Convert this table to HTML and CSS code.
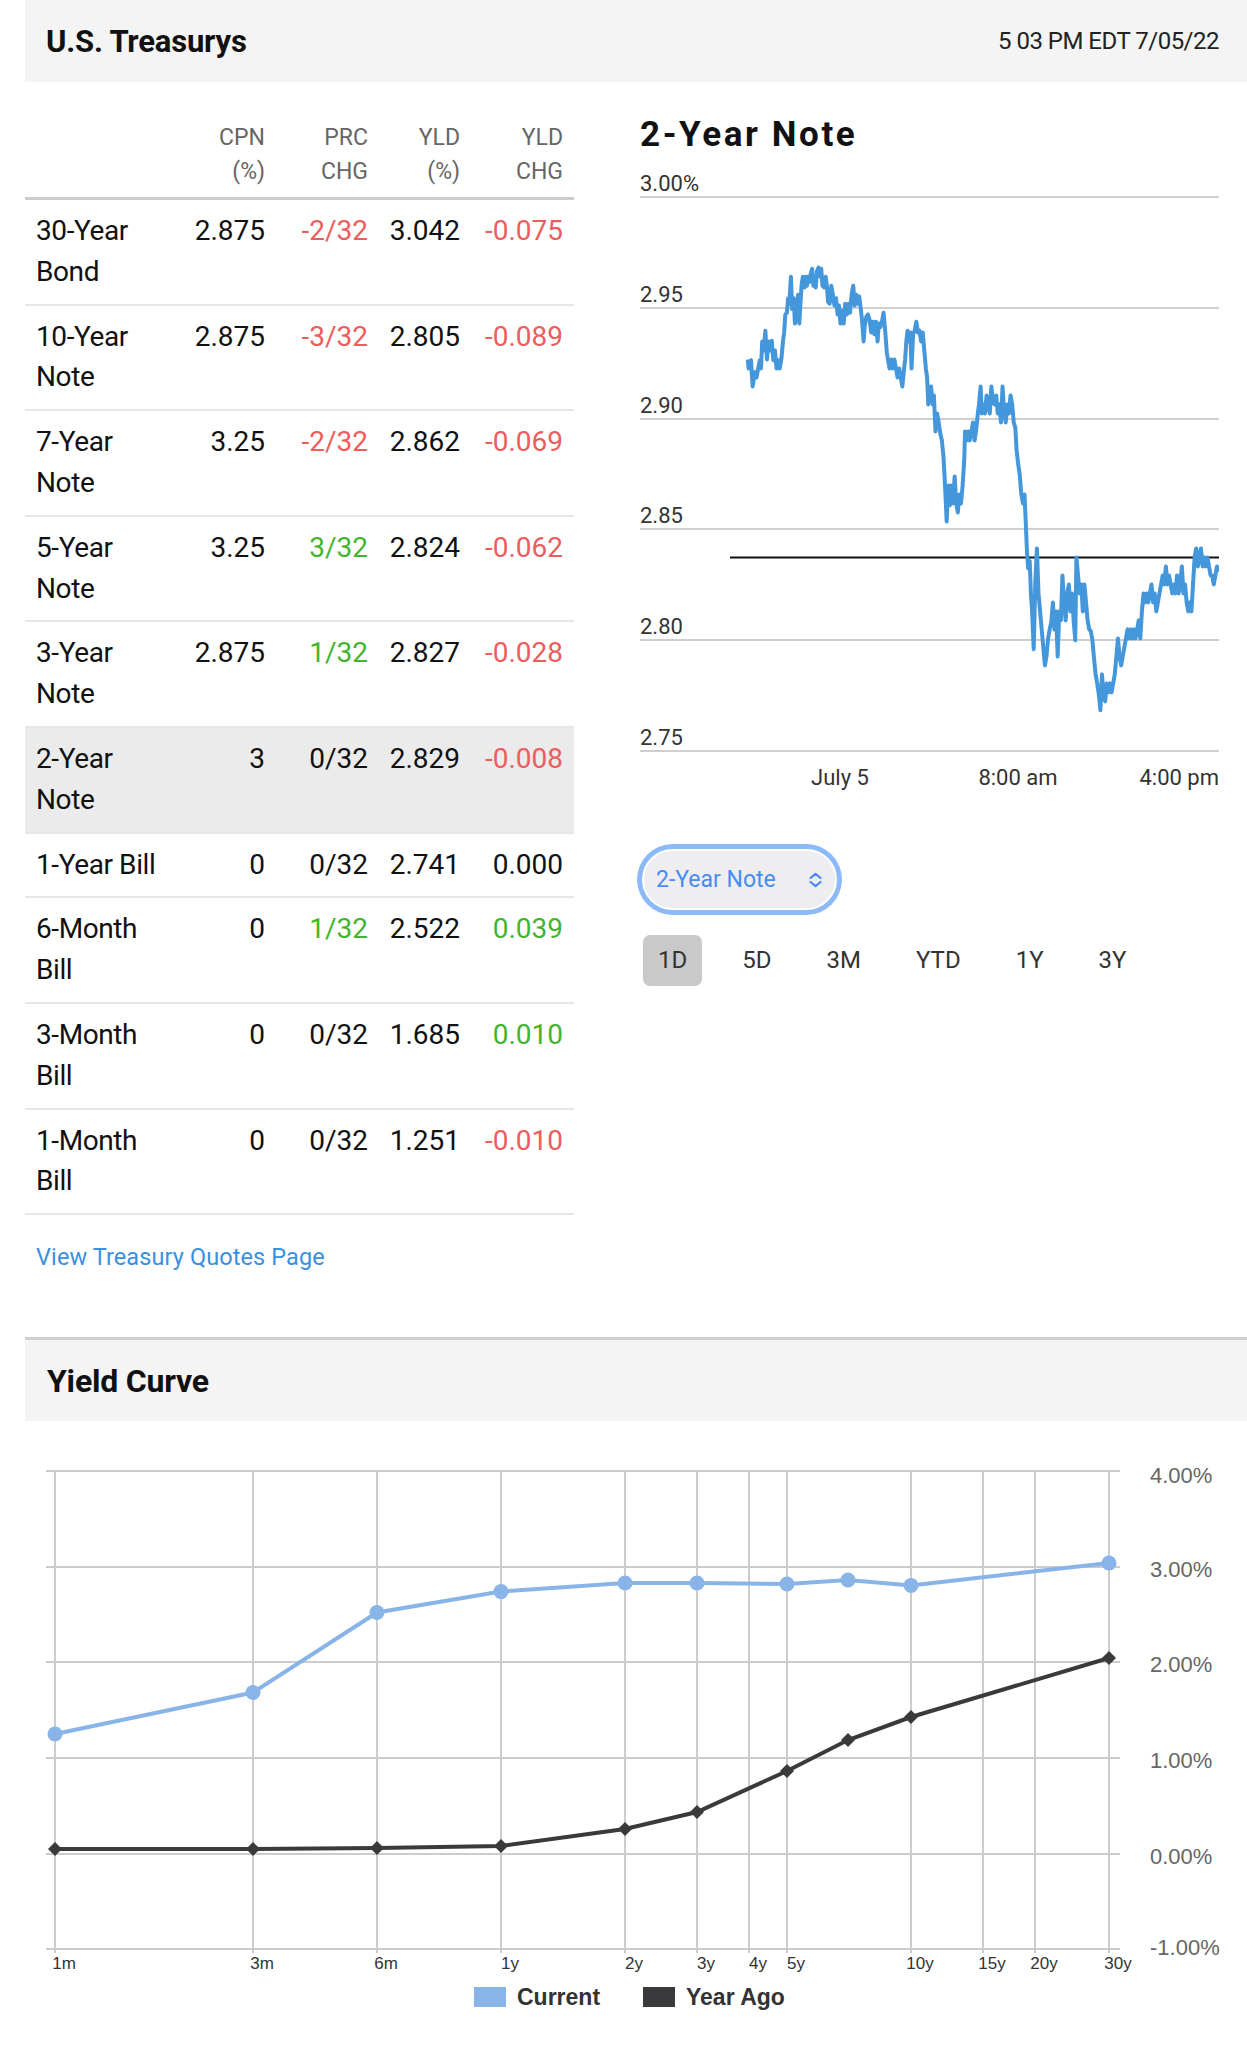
FILE: index.html
```html
<!DOCTYPE html>
<html lang="en">
<head>
<meta charset="utf-8">
<title>U.S. Treasurys</title>
<link rel="stylesheet" href="styles.css">
</head>
<body>
<div class="page">
  <header class="band top-band">
    <h1 class="band-title">U.S. Treasurys</h1>
    <span class="stamp">5 03 PM EDT 7/05/22</span>
  </header>

  <div class="main">
    <section class="left">
      <div class="tbl">
        <div class="row head">
          <div class="c name"></div>
          <div class="c">CPN<br>(%)</div>
          <div class="c">PRC<br>CHG</div>
          <div class="c">YLD<br>(%)</div>
          <div class="c">YLD<br>CHG</div>
        </div>
        <div class="row">
          <div class="c name">30-Year<br>Bond</div>
          <div class="c">2.875</div><div class="c neg">-2/32</div><div class="c">3.042</div><div class="c neg">-0.075</div>
        </div>
        <div class="row">
          <div class="c name">10-Year<br>Note</div>
          <div class="c">2.875</div><div class="c neg">-3/32</div><div class="c">2.805</div><div class="c neg">-0.089</div>
        </div>
        <div class="row">
          <div class="c name">7-Year<br>Note</div>
          <div class="c">3.25</div><div class="c neg">-2/32</div><div class="c">2.862</div><div class="c neg">-0.069</div>
        </div>
        <div class="row">
          <div class="c name">5-Year<br>Note</div>
          <div class="c">3.25</div><div class="c pos">3/32</div><div class="c">2.824</div><div class="c neg">-0.062</div>
        </div>
        <div class="row">
          <div class="c name">3-Year<br>Note</div>
          <div class="c">2.875</div><div class="c pos">1/32</div><div class="c">2.827</div><div class="c neg">-0.028</div>
        </div>
        <div class="row selected">
          <div class="c name">2-Year<br>Note</div>
          <div class="c">3</div><div class="c">0/32</div><div class="c">2.829</div><div class="c neg">-0.008</div>
        </div>
        <div class="row">
          <div class="c name">1-Year Bill</div>
          <div class="c">0</div><div class="c">0/32</div><div class="c">2.741</div><div class="c">0.000</div>
        </div>
        <div class="row">
          <div class="c name">6-Month<br>Bill</div>
          <div class="c">0</div><div class="c pos">1/32</div><div class="c">2.522</div><div class="c pos">0.039</div>
        </div>
        <div class="row">
          <div class="c name">3-Month<br>Bill</div>
          <div class="c">0</div><div class="c">0/32</div><div class="c">1.685</div><div class="c pos">0.010</div>
        </div>
        <div class="row">
          <div class="c name">1-Month<br>Bill</div>
          <div class="c">0</div><div class="c">0/32</div><div class="c">1.251</div><div class="c neg">-0.010</div>
        </div>
      </div>
      <a class="quotes-link" href="#">View Treasury Quotes Page</a>
    </section>

    <section class="right">
      <h2 class="note-title">2-Year Note</h2>
      <svg class="note-chart" width="579" height="630" viewBox="640 165 579 630">
        <g class="grid">
          <line x1="640" y1="197" x2="1219" y2="197"/>
          <line x1="640" y1="308" x2="1219" y2="308"/>
          <line x1="640" y1="419" x2="1219" y2="419"/>
          <line x1="640" y1="529" x2="1219" y2="529"/>
          <line x1="640" y1="640" x2="1219" y2="640"/>
          <line x1="640" y1="751" x2="1219" y2="751"/>
        </g>
        <g class="ylab">
          <text x="640" y="191">3.00%</text>
          <text x="640" y="302">2.95</text>
          <text x="640" y="413">2.90</text>
          <text x="640" y="523">2.85</text>
          <text x="640" y="634">2.80</text>
          <text x="640" y="745">2.75</text>
        </g>
        <line class="prev" x1="730" y1="557.5" x2="1219" y2="557.5"/>
        <polyline class="series" transform="matrix(0.3993 0 0 0.3599 620.03 226.3)" points="320,370 322,395 328,372 332,445 338,405 342,420 346,395 350,372 353,395 356,320 360,345 364,290 368,370 372,320 376,345 380,318 384,372 388,345 392,395 396,372 400,395 404,370 408,320 411,295 414,245 418,240 421,200 424,215 428,140 431,230 435,200 438,270 442,240 446,190 449,270 452,210 455,160 458,140 462,170 465,140 468,165 471,140 474,155 478,130 481,118 484,165 487,140 490,170 493,125 497,115 501,140 504,118 507,165 511,170 515,140 518,165 521,210 525,215 529,165 533,190 537,220 541,200 545,245 548,220 552,270 556,235 560,270 564,215 568,245 572,215 576,240 580,190 584,165 588,220 592,190 596,215 599,195 603,230 606,260 610,320 613,275 617,250 621,245 625,260 629,295 633,265 637,300 641,265 645,320 648,270 652,280 656,265 660,240 664,290 668,350 671,370 675,395 679,370 683,395 687,370 691,395 695,420 699,395 703,420 707,445 711,400 714,370 717,320 720,290 724,320 727,295 730,395 734,300 738,290 742,265 746,295 750,290 754,320 758,295 762,345 766,395 769,420 772,495 775,470 779,445 783,495 786,470 790,570 794,520 798,545 802,575 806,595 810,640 813,700 816,770 818,820 822,720 826,775 830,720 834,770 838,695 842,770 846,795 850,745 854,770 858,720 862,650 864,570 868,595 872,570 876,595 880,570 884,545 888,595 892,565 896,520 899,495 903,445 906,520 910,495 914,520 918,470 922,495 926,520 930,445 934,490 938,495 942,470 946,520 950,495 954,545 958,445 962,520 966,545 970,495 974,520 978,470 982,495 986,545 990,560 993,620 997,660 1001,690 1005,745 1009,770 1013,745 1016,820 1019,900 1022,950 1026,930 1029,1020 1032,1070 1036,1175 1040,990 1044,895 1048,1020 1052,1070 1056,1120 1060,1170 1064,1220 1068,1195 1072,1145 1076,1120 1080,1100 1084,1045 1088,1120 1092,1070 1096,1195 1100,1070 1104,1095 1108,970 1112,1045 1116,1095 1120,1020 1124,995 1128,1070 1132,1020 1136,1095 1140,1150 1143,920 1147,970 1151,1020 1155,995 1159,1070 1163,995 1167,1045 1171,1095 1175,1120 1179,1125 1183,1150 1187,1200 1191,1245 1195,1270 1199,1300 1203,1345 1207,1245 1211,1300 1215,1320 1219,1270 1223,1295 1227,1270 1231,1295 1235,1270 1239,1245 1243,1195 1247,1145 1251,1195 1255,1220 1259,1195 1263,1170 1267,1145 1271,1120 1275,1145 1279,1120 1283,1145 1287,1120 1291,1145 1295,1120 1299,1095 1303,1145 1307,1070 1311,1020 1315,1045 1319,1020 1323,1045 1327,1020 1331,995 1335,1045 1339,1020 1343,1070 1347,1045 1351,1020 1355,995 1359,970 1363,995 1367,945 1371,995 1375,970 1379,995 1383,1020 1387,995 1391,1020 1395,970 1399,1020 1403,995 1407,945 1411,1020 1415,995 1419,1045 1423,1070 1427,1045 1431,1070 1435,995 1439,920 1443,895 1447,945 1451,920 1455,895 1459,945 1463,920 1467,945 1471,920 1475,945 1479,970 1483,970 1487,995 1491,970 1495,945 1499,960"/>
        <g class="xlab">
          <text x="840" y="785" text-anchor="middle">July 5</text>
          <text x="1018" y="785" text-anchor="middle">8:00 am</text>
          <text x="1219" y="785" text-anchor="end">4:00 pm</text>
        </g>
      </svg>

      <div class="select">
        <span class="select-label">2-Year Note</span>
        <svg class="chev" width="15" height="16" viewBox="0 0 15 16"><path d="M2.5 6 L7.5 1.8 L12.5 6 M2.5 10 L7.5 14.2 L12.5 10"/></svg>
      </div>

      <div class="ranges">
        <span class="rng active">1D</span>
        <span class="rng">5D</span>
        <span class="rng">3M</span>
        <span class="rng">YTD</span>
        <span class="rng">1Y</span>
        <span class="rng">3Y</span>
      </div>
    </section>
  </div>

  <section class="yc">
    <div class="band yc-band">
      <h2 class="band-title">Yield Curve</h2>
    </div>
    <svg class="yc-chart" width="1222" height="634" viewBox="25 1421 1222 634">
      <g class="ycgrid">
        <line x1="46" y1="1471" x2="1120" y2="1471"/>
        <line x1="46" y1="1567" x2="1120" y2="1567"/>
        <line x1="46" y1="1662" x2="1120" y2="1662"/>
        <line x1="46" y1="1758" x2="1120" y2="1758"/>
        <line x1="46" y1="1854" x2="1120" y2="1854"/>
        <line x1="46" y1="1949" x2="1120" y2="1949"/>
        <line x1="55" y1="1471" x2="55" y2="1953"/>
        <line x1="253" y1="1471" x2="253" y2="1953"/>
        <line x1="377" y1="1471" x2="377" y2="1953"/>
        <line x1="501" y1="1471" x2="501" y2="1953"/>
        <line x1="625" y1="1471" x2="625" y2="1953"/>
        <line x1="697" y1="1471" x2="697" y2="1953"/>
        <line x1="749" y1="1471" x2="749" y2="1953"/>
        <line x1="787" y1="1471" x2="787" y2="1953"/>
        <line x1="911" y1="1471" x2="911" y2="1953"/>
        <line x1="983" y1="1471" x2="983" y2="1953"/>
        <line x1="1035" y1="1471" x2="1035" y2="1953"/>
        <line x1="1109" y1="1471" x2="1109" y2="1953"/>
      </g>
      <g class="ycy">
        <text x="1150" y="1483">4.00%</text>
        <text x="1150" y="1577">3.00%</text>
        <text x="1150" y="1672">2.00%</text>
        <text x="1150" y="1768">1.00%</text>
        <text x="1150" y="1864">0.00%</text>
        <text x="1150" y="1955">-1.00%</text>
      </g>
      <g class="ycx">
        <text x="64" y="1969">1m</text>
        <text x="262" y="1969">3m</text>
        <text x="386" y="1969">6m</text>
        <text x="510" y="1969">1y</text>
        <text x="634" y="1969">2y</text>
        <text x="706" y="1969">3y</text>
        <text x="758" y="1969">4y</text>
        <text x="796" y="1969">5y</text>
        <text x="920" y="1969">10y</text>
        <text x="992" y="1969">15y</text>
        <text x="1044" y="1969">20y</text>
        <text x="1118" y="1969">30y</text>
      </g>
      <polyline class="ago-line" points="55,1849 253,1849 377,1848 501,1846 625,1829 697,1812 787,1771 848,1740 911,1717 1109,1658"/>
      <g class="ago-pt">
        <polygon points="55,1842 62,1849 55,1856 48,1849"/>
        <polygon points="253,1842 260,1849 253,1856 246,1849"/>
        <polygon points="377,1841 384,1848 377,1855 370,1848"/>
        <polygon points="501,1839 508,1846 501,1853 494,1846"/>
        <polygon points="625,1822 632,1829 625,1836 618,1829"/>
        <polygon points="697,1805 704,1812 697,1819 690,1812"/>
        <polygon points="787,1764 794,1771 787,1778 780,1771"/>
        <polygon points="848,1733 855,1740 848,1747 841,1740"/>
        <polygon points="911,1710 918,1717 911,1724 904,1717"/>
        <polygon points="1109,1651 1116,1658 1109,1665 1102,1658"/>
      </g>
      <polyline class="cur-line" points="55,1734 253,1692.5 377,1612.5 501,1591.6 625,1583 697,1583 787,1584 848,1580 911,1585.5 1109,1563"/>
      <g class="cur-pt">
        <circle cx="55" cy="1734" r="7.5"/>
        <circle cx="253" cy="1692.5" r="7.5"/>
        <circle cx="377" cy="1612.5" r="7.5"/>
        <circle cx="501" cy="1591.6" r="7.5"/>
        <circle cx="625" cy="1583" r="7.5"/>
        <circle cx="697" cy="1583" r="7.5"/>
        <circle cx="787" cy="1584" r="7.5"/>
        <circle cx="848" cy="1580" r="7.5"/>
        <circle cx="911" cy="1585.5" r="7.5"/>
        <circle cx="1109" cy="1563" r="7.5"/>
      </g>
      <g class="legend">
        <rect class="sw-cur" x="474" y="1987" width="32" height="20"/>
        <text x="517" y="2005">Current</text>
        <rect class="sw-ago" x="643" y="1987" width="32" height="20"/>
        <text x="686" y="2005">Year Ago</text>
      </g>
    </svg>
  </section>
</div>
</body>
</html>
```

FILE: styles.css
```css
html, body {
  margin: 0;
  padding: 0;
  background: #fff;
}

body {
  font-family: Roboto, "Liberation Sans", Arial, sans-serif;
  color: #111;
}

.page {
  margin-left: 25px;
  width: 1222px;
}

.band {
  background: #f4f4f4;
  display: flex;
  align-items: center;
  justify-content: space-between;
  box-sizing: border-box;
}

.top-band {
  height: 82px;
  padding: 0 28px 0 21px;
}

.band-title {
  margin: 0;
  font-size: 31px;
  font-weight: 700;
  color: #111;
  letter-spacing: -0.2px;
}

.stamp {
  font-size: 24px;
  color: #222;
  letter-spacing: -0.5px;
}

.main {
  display: flex;
  align-items: flex-start;
}

.left {
  width: 549px;
  padding-top: 39px;
}

.row {
  display: grid;
  grid-template-columns: 144px 96px 103px 92px 103px;
  padding: 11px 11px 11px 0;
  border-bottom: 2px solid #e6e6e6;
  font-size: 28px;
  line-height: 40.8px;
  color: #111;
}

.row .c {
  text-align: right;
}

.row .c.name {
  text-align: left;
  padding-left: 11px;
  letter-spacing: -0.4px;
}

.row.head {
  padding-top: 0;
  padding-bottom: 8px;
  border-bottom: 3px solid #cccccc;
  font-size: 23px;
  line-height: 34px;
  color: #666;
}

.row.selected {
  background: #ebebeb;
}

.neg { color: #ee5c5c; }
.pos { color: #43b52d; }

.quotes-link {
  display: block;
  margin: 27px 0 0 11px;
  font-size: 23.5px;
  line-height: 30px;
  color: #3b8fe0;
  text-decoration: none;
  letter-spacing: 0.1px;
}

.right {
  margin-left: 66px;
  width: 579px;
  padding-top: 31px;
}

.note-title {
  margin: 0;
  font-size: 35px;
  line-height: 44px;
  font-weight: 700;
  letter-spacing: 2.6px;
  color: #111;
}

.note-chart {
  display: block;
  margin-top: 8px;
  font-family: Roboto, "Liberation Sans", Arial, sans-serif;
}

.grid line {
  stroke: #cfcfcf;
  stroke-width: 2;
}

.ylab text, .xlab text {
  font-size: 22px;
  fill: #333;
}

.prev {
  stroke: #111;
  stroke-width: 2;
}

.series {
  fill: none;
  stroke: #4597db;
  stroke-width: 4;
  stroke-linejoin: round;
  vector-effect: non-scaling-stroke;
}

.select {
  margin: 54px 0 0 2px;
  width: 195px;
  height: 61px;
  box-sizing: border-box;
  border: 2px solid #fff;
  border-radius: 31px;
  background: #eeeef0;
  box-shadow: 0 0 0 5px #8cb9f7;
  display: flex;
  align-items: center;
  justify-content: space-between;
  padding: 0 12px 0 12px;
}

.select-label {
  font-size: 23px;
  color: #468cf3;
}

.chev path {
  fill: none;
  stroke: #468cf3;
  stroke-width: 2.2;
  stroke-linecap: round;
  stroke-linejoin: round;
}

.ranges {
  display: flex;
  gap: 25px;
  margin: 25px 0 0 3px;
}

.rng {
  display: block;
  padding: 0 15px;
  height: 51px;
  line-height: 51px;
  font-size: 24px;
  color: #333;
  border-radius: 7px;
}

.rng.active {
  background: #c9c9c9;
}

.yc {
  margin-top: 65px;
  border-top: 3px solid #d0d0d0;
}

.yc-band {
  height: 81px;
  padding-left: 22px;
}

.yc-band .band-title {
  font-size: 32px;
}

.yc-chart {
  display: block;
  font-family: "Liberation Sans", Arial, sans-serif;
}

.ycgrid line {
  stroke: #cccccc;
  stroke-width: 2;
}

.ycy text {
  font-size: 22px;
  fill: #666;
}

.ycx text {
  font-size: 17px;
  fill: #333;
  text-anchor: middle;
}

.cur-line {
  fill: none;
  stroke: #89b4e8;
  stroke-width: 4;
}

.cur-pt circle {
  fill: #89b4e8;
}

.ago-line {
  fill: none;
  stroke: #3a3a3c;
  stroke-width: 4;
}

.ago-pt polygon {
  fill: #3a3a3c;
}

.legend text {
  font-size: 23px;
  font-weight: 700;
  fill: #333;
}

.sw-cur { fill: #89b4e8; }
.sw-ago { fill: #3a3a3c; }
```
